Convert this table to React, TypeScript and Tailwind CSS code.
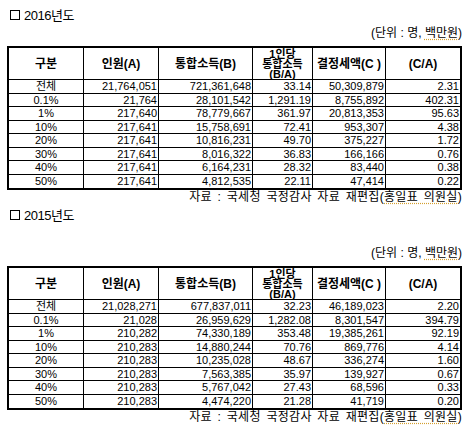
import React from "react";

type Row = [string, string, string, string, string, string];

const data2016: Row[] = [
  ["전체", "21,764,051", "721,361,648", "33.14", "50,309,879", "2.31"],
  ["0.1%", "21,764", "28,101,542", "1,291.19", "8,755,892", "402.31"],
  ["1%", "217,640", "78,779,667", "361.97", "20,813,353", "95.63"],
  ["10%", "217,641", "15,758,691", "72.41", "953,307", "4.38"],
  ["20%", "217,641", "10,816,231", "49.70", "375,227", "1.72"],
  ["30%", "217,641", "8,016,322", "36.83", "166,166", "0.76"],
  ["40%", "217,641", "6,164,231", "28.32", "83,440", "0.38"],
  ["50%", "217,641", "4,812,535", "22.11", "47,414", "0.22"],
];

const data2015: Row[] = [
  ["전체", "21,028,271", "677,837,011", "32.23", "46,189,023", "2.20"],
  ["0.1%", "21,028", "26,959,629", "1,282.08", "8,301,547", "394.79"],
  ["1%", "210,282", "74,330,189", "353.48", "19,385,261", "92.19"],
  ["10%", "210,283", "14,880,244", "70.76", "869,776", "4.14"],
  ["20%", "210,283", "10,235,028", "48.67", "336,274", "1.60"],
  ["30%", "210,283", "7,563,385", "35.97", "139,927", "0.67"],
  ["40%", "210,283", "5,767,042", "27.43", "68,596", "0.33"],
  ["50%", "210,283", "4,474,220", "21.28", "41,719", "0.20"],
];

const font = { fontFamily: '"Liberation Sans", "Noto Sans CJK KR", sans-serif' };

function Title({ year }: { year: string }) {
  return (
    <div className="flex items-center h-[16px] pl-[10px] gap-[4px] text-[13px] text-black leading-none">
      <span className="inline-block w-[10px] h-[10px] border border-black" />
      <span className="tracking-[-0.5px]">{year}년도</span>
    </div>
  );
}

function Unit() {
  return (
    <div className="flex justify-end pr-[12px] h-[12px] items-center text-[12px] leading-none text-black">
      <span>
        (단위 : 명,{" "}
        <span className="underline decoration-dotted decoration-[#d4a030] underline-offset-2">백만원</span>)
      </span>
    </div>
  );
}

function Source() {
  return (
    <div className="flex justify-end pr-[12px] h-[14px] items-center text-[12px] leading-none text-black tracking-[0.3px] [word-spacing:2px]">
      <span>
        자료 : 국세청 국정감사 자료 재편집(
        <span className="underline decoration-dotted decoration-[#d4a030] underline-offset-2">홍일표 의원실</span>)
      </span>
    </div>
  );
}

const cols = "grid grid-cols-[75px_75px_94px_60px_73px_74px]";

function Table({ rows }: { rows: Row[] }) {
  return (
    <div className="ml-[7px] w-[455px] border-2 border-black">
      <div className={`${cols} h-[32px] border-b border-black font-bold text-[12px] leading-none`}>
        <div className="flex items-center justify-center border-r border-black">구분</div>
        <div className="flex items-center justify-center border-r border-black">인원(A)</div>
        <div className="flex items-center justify-center border-r border-black">통합소득(B)</div>
        <div className="flex flex-col items-center justify-center border-r border-black text-[11px] leading-[10px]">
          <span className="h-[10px]">1인당</span>
          <span className="h-[10px]">통합소득</span>
          <span className="h-[10px]">(B/A)</span>
        </div>
        <div className="flex items-center justify-center border-r border-black">결정세액(C )</div>
        <div className="flex items-center justify-center">(C/A)</div>
      </div>
      {rows.map((r, i) => (
        <div
          key={i}
          className={`${cols} text-[11px] leading-none ${i % 2 === 0 ? "h-[14px]" : "h-[13px]"} ${
            i < rows.length - 1 ? "border-b border-black" : ""
          }`}
        >
          <div className="flex items-center justify-center border-r border-black">{r[0]}</div>
          {r.slice(1).map((c, j) => (
            <div
              key={j}
              className={`flex items-center justify-end pr-[1px] ${j < 4 ? "border-r border-black" : ""}`}
            >
              {c}
            </div>
          ))}
        </div>
      ))}
    </div>
  );
}

export default function App() {
  return (
    <div className="w-[474px] h-[438px] bg-white text-black overflow-hidden" style={font}>
      <div className="pt-[7px]">
        <Title year="2016" />
        <div className="mt-[4px]">
          <Unit />
        </div>
        <div className="mt-[7px]">
          <Table rows={data2016} />
        </div>
        <Source />
        <div className="mt-[3px]">
          <Title year="2015" />
        </div>
        <div className="mt-[24px]">
          <Unit />
        </div>
        <div className="mt-[7px]">
          <Table rows={data2015} />
        </div>
        <Source />
      </div>
    </div>
  );
}
